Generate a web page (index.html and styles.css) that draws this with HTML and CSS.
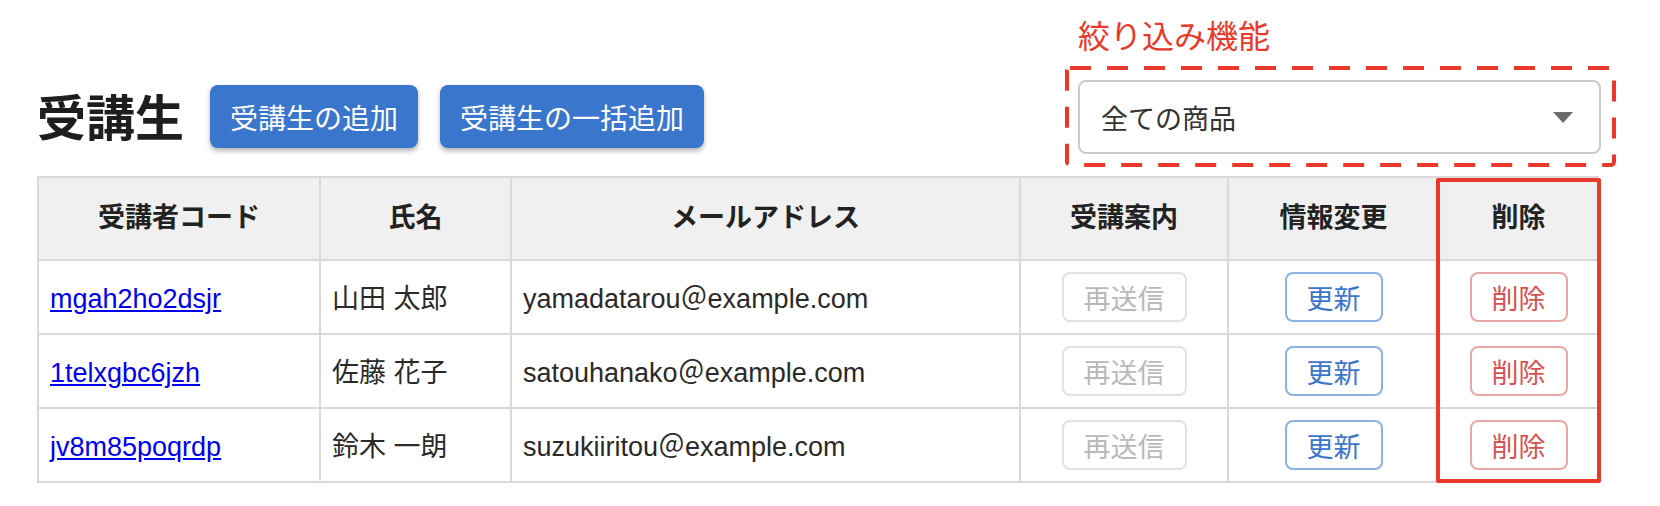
FILE: index.html
```html
<!DOCTYPE html>
<html lang="ja">
<head>
  <meta charset="UTF-8" />
  <title>受講生</title>
  <link rel="stylesheet" href="styles.css">
</head>
<body>
  <div class="page">
    <div class="toolbar">
      <h1 class="title">受講生</h1>
      <button class="btn-primary">受講生の追加</button>
      <button class="btn-primary">受講生の一括追加</button>

      <div class="filter">
        <span class="note">絞り込み機能</span>
        <svg class="dash-frame" width="551" height="101" viewBox="0 0 551 101">
          <rect x="2" y="2" width="547" height="97" rx="3" />
        </svg>
        <div class="select">
          <span>全ての商品</span>
          <span class="caret"></span>
        </div>
      </div>
    </div>

    <div class="table-wrap">
      <table class="students">
        <colgroup>
          <col style="width:282px">
          <col style="width:191px">
          <col style="width:509px">
          <col style="width:208px">
          <col style="width:211px">
          <col style="width:159px">
        </colgroup>
        <thead>
          <tr>
            <th>受講者コード</th>
            <th>氏名</th>
            <th>メールアドレス</th>
            <th>受講案内</th>
            <th>情報変更</th>
            <th>削除</th>
          </tr>
        </thead>
        <tbody>
          <tr>
            <td><a href="#">mgah2ho2dsjr</a></td>
            <td>山田 太郎</td>
            <td>yamadatarou＠example.com</td>
            <td class="center"><button class="btn-cell muted">再送信</button></td>
            <td class="center"><button class="btn-cell blue">更新</button></td>
            <td class="center"><button class="btn-cell red">削除</button></td>
          </tr>
          <tr>
            <td><a href="#">1telxgbc6jzh</a></td>
            <td>佐藤 花子</td>
            <td>satouhanako＠example.com</td>
            <td class="center"><button class="btn-cell muted">再送信</button></td>
            <td class="center"><button class="btn-cell blue">更新</button></td>
            <td class="center"><button class="btn-cell red">削除</button></td>
          </tr>
          <tr>
            <td><a href="#">jv8m85poqrdp</a></td>
            <td>鈴木 一朗</td>
            <td>suzukiiritou＠example.com</td>
            <td class="center"><button class="btn-cell muted">再送信</button></td>
            <td class="center"><button class="btn-cell blue">更新</button></td>
            <td class="center"><button class="btn-cell red">削除</button></td>
          </tr>
        </tbody>
      </table>
      <div class="highlight"></div>
    </div>
  </div>
</body>
</html>
```

FILE: styles.css
```css
:root {
  --text: #222;
  --border: #d9d9d9;
  --head-bg: #f0f0f0;
  --primary: #3a76cc;
  --annot: #e8392b;
}

body {
  margin: 0;
  background: #fff;
  color: var(--text);
  font-family: "Liberation Sans", "Noto Sans CJK JP", sans-serif;
}

.page {
  padding-left: 37px;
}

/* top bar */
.toolbar {
  display: flex;
  align-items: center;
  width: 1579px;
  margin-top: 66px;
}

.title {
  margin: 0 0 4px 0;
  font-family: "Noto Sans CJK JP", sans-serif;
  font-size: 49px;
  font-weight: bold;
  line-height: 1;
  color: #1e1e1e;
}

.btn-primary {
  height: 63px;
  padding: 0 20px;
  margin-left: 22px;
  border: none;
  border-radius: 8px;
  background: var(--primary);
  color: #fff;
  font-family: "Noto Sans CJK JP", sans-serif;
  font-size: 28px;
  line-height: 1;
  box-shadow: 0 3px 5px rgba(0, 0, 0, 0.3);
}

.title + .btn-primary {
  margin-left: 26px;
}

/* filter with annotation */
.filter {
  position: relative;
  margin-left: auto;
  padding: 14px 15px 13px 13px;
}

.note {
  position: absolute;
  left: 13px;
  top: -48px;
  font-family: "Noto Sans CJK JP", sans-serif;
  font-size: 32px;
  line-height: 1;
  color: var(--annot);
  white-space: nowrap;
}

.dash-frame {
  position: absolute;
  left: 0;
  top: 0;
}

.dash-frame rect {
  fill: none;
  stroke: var(--annot);
  stroke-width: 4;
  stroke-dasharray: 21 16;
}

.select {
  display: flex;
  align-items: center;
  justify-content: space-between;
  box-sizing: border-box;
  width: 523px;
  height: 74px;
  padding: 0 26px 0 21px;
  border: 2px solid #cbcbcb;
  border-radius: 8px;
  background: #fff;
  font-family: "Noto Sans CJK JP", sans-serif;
  font-size: 27px;
  color: #333;
}

.caret {
  width: 0;
  height: 0;
  border-left: 10px solid transparent;
  border-right: 10px solid transparent;
  border-top: 11px solid #6b6b6b;
}

/* table */
.table-wrap {
  position: relative;
  width: 1560px;
  margin-top: 9px;
}

.students {
  width: 1560px;
  border-collapse: collapse;
  table-layout: fixed;
  font-size: 27px;
  line-height: 1.2;
}

.students th,
.students td {
  border: 2px solid var(--border);
  padding: 0 11px;
  text-align: left;
  white-space: nowrap;
}

.students th {
  height: 81px;
  background: var(--head-bg);
  text-align: center;
  font-weight: bold;
  color: #222;
}

.students td {
  height: 67px;
  padding-top: 5px;
  color: #2a2a2a;
}

.students td.center {
  height: 72px;
  padding-top: 0;
  text-align: center;
}

.students a {
  color: #0000ee;
  text-decoration: underline;
}

.btn-cell {
  height: 50px;
  padding: 0 20px;
  border: 2px solid;
  border-radius: 8px;
  background: #fff;
  font-family: "Noto Sans CJK JP", sans-serif;
  font-size: 27px;
  line-height: 1;
  vertical-align: middle;
}

.btn-cell.muted {
  border-color: #e2e2e2;
  color: #b9b9b9;
}

.btn-cell.blue {
  border-color: #8bb1e6;
  color: #3a76cc;
}

.btn-cell.red {
  border-color: #eba6a6;
  color: #d65252;
}

.highlight {
  position: absolute;
  left: 1399px;
  top: 2px;
  width: 165px;
  height: 305px;
  box-sizing: border-box;
  border: 4px solid var(--annot);
  border-radius: 2px;
}
```
